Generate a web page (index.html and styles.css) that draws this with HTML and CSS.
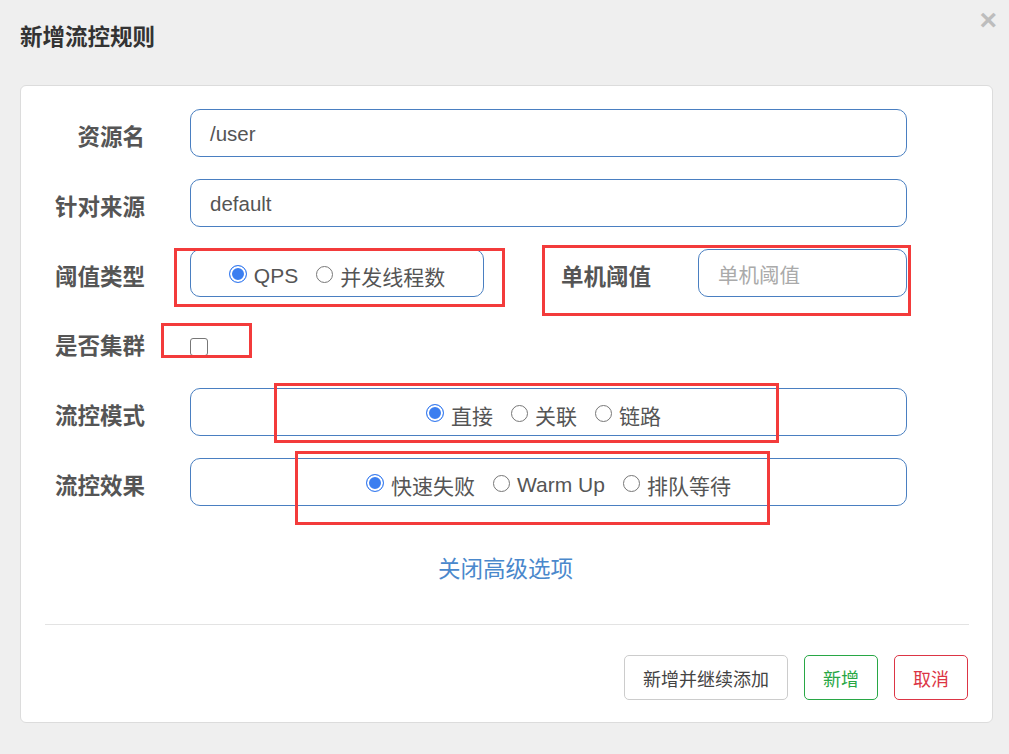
FILE: index.html
```html
<!DOCTYPE html>
<html lang="zh">
<head>
<meta charset="utf-8">
<title>新增流控规则</title>
<link rel="stylesheet" href="styles.css">
</head>
<body>
<div class="page">
  <header class="dlg-head">
    <h1 class="dlg-title">新增流控规则</h1>
    <span class="dlg-close">×</span>
  </header>
  <section class="panel">
    <div class="row">
      <label class="lbl">资源名</label>
      <div class="field wide">/user</div>
    </div>
    <div class="row">
      <label class="lbl">针对来源</label>
      <div class="field wide">default</div>
    </div>
    <div class="row">
      <label class="lbl">阈值类型</label>
      <div class="field radios half">
        <span class="opt"><span class="radio on"></span>QPS</span>
        <span class="opt"><span class="radio"></span>并发线程数</span>
      </div>
      <label class="lbl lbl2">单机阈值</label>
      <div class="field small placeholder">单机阈值</div>
    </div>
    <div class="row row-check">
      <label class="lbl">是否集群</label>
      <span class="checkbox"></span>
    </div>
    <div class="row">
      <label class="lbl">流控模式</label>
      <div class="field radios wide mode">
        <span class="opt"><span class="radio on"></span>直接</span>
        <span class="opt"><span class="radio"></span>关联</span>
        <span class="opt"><span class="radio"></span>链路</span>
      </div>
    </div>
    <div class="row">
      <label class="lbl">流控效果</label>
      <div class="field radios wide">
        <span class="opt"><span class="radio on"></span>快速失败</span>
        <span class="opt"><span class="radio"></span>Warm Up</span>
        <span class="opt"><span class="radio"></span>排队等待</span>
      </div>
    </div>
    <div class="link-row"><a class="adv-link">关闭高级选项</a></div>
    <hr class="divider">
    <div class="actions">
      <button class="btn btn-default">新增并继续添加</button>
      <button class="btn btn-ok">新增</button>
      <button class="btn btn-cancel">取消</button>
    </div>
  </section>
  <div class="mark m1"></div>
  <div class="mark m2"></div>
  <div class="mark m3"></div>
  <div class="mark m4"></div>
  <div class="mark m5"></div>
</div>
</body>
</html>
```
FILE: styles.css
```css
* { box-sizing: border-box; }
html, body { margin: 0; padding: 0; }
body {
  background: #efefef;
  font-family: "Liberation Sans", "Noto Sans CJK SC", sans-serif;
  color: #555;
  width: 1009px;
  height: 754px;
  overflow: hidden;
}
.page { position: relative; width: 1009px; height: 754px; padding: 0 16px 0 20px; }
.dlg-head {
  display: flex;
  justify-content: space-between;
  align-items: flex-start;
  height: 85px;
}
.dlg-title {
  margin: 25px 0 0 0;
  font-size: 22.5px;
  line-height: 26px;
  font-weight: bold;
  color: #333;
}
.dlg-close {
  margin: 5px -4px 0 0;
  font-size: 30px;
  line-height: 30px;
  font-weight: bold;
  color: #bdbdbd;
}
.panel {
  width: 973px;
  height: 638px;
  background: #fff;
  border: 1px solid #dcdcdc;
  border-radius: 6px;
  padding: 23px 24px 0 32px;
}
.row {
  display: flex;
  align-items: center;
  height: 48px;
  margin-bottom: 22px;
}
.row-check { height: 47px; margin-bottom: 22px; }
.lbl {
  width: 92px;
  text-align: right;
  font-size: 22.5px;
  font-weight: bold;
  color: #555;
  padding-top: 3px;
  margin-right: 45px;
  white-space: nowrap;
}
.lbl2 { text-align: left; margin-left: 77px; }
.field {
  height: 48px;
  border: 1px solid #4a7fc1;
  border-radius: 10px;
  font-size: 20.5px;
  color: #555;
  display: flex;
  align-items: center;
  padding-left: 19px;
  padding-top: 2px;
}
.wide { width: 717px; }
.half { width: 294px; }
.small { width: 209px; }
.placeholder { color: #aaa; }
.radios { justify-content: center; padding-left: 0; padding-top: 5px; gap: 18px; font-size: 21px; }
.wide.radios { padding-left: 0; }
.wide.mode { padding-right: 10px; }
.opt { display: inline-flex; align-items: center; white-space: nowrap; }
.radio {
  width: 17px;
  height: 17px;
  border: 1.5px solid #777;
  border-radius: 50%;
  margin-right: 7px;
  margin-top: -3px;
  background: #fff;
}
.radio.on {
  border: 1.5px solid #3b7ef0;
  background: #3b7ef0;
  box-shadow: inset 0 0 0 2px #fff;
  width: 18px;
  height: 18px;
}
.checkbox {
  width: 18px;
  height: 18px;
  border: 1.5px solid #777;
  border-radius: 3px;
  margin-top: 8px;
}
.link-row { text-align: center; padding: 28px 0 0 0; height: 96px; margin-left: -10px; }
.adv-link { font-size: 22.5px; color: #4a88cc; line-height: 28px; }
.divider {
  margin: 0 0 0 -8px;
  border: 0;
  border-top: 1px solid #e3e3e3;
  width: 924px;
}
.actions {
  display: flex;
  justify-content: flex-end;
  gap: 16px;
  margin-top: 30px;
}
.btn {
  height: 45px;
  background: #fff;
  border-radius: 5px;
  font-family: "Liberation Sans", "Noto Sans CJK SC", sans-serif;
  font-size: 18px;
  padding: 0;
}
.btn-default { width: 164px; border: 1px solid #ccc; color: #444; }
.btn-ok { width: 74px; border: 1px solid #28a745; color: #28a745; }
.btn-cancel { width: 74px; border: 1px solid #dc3545; color: #dc3545; }
.mark { position: absolute; border: 3px solid #f33b3b; }
.m1 { left: 174px; top: 248px; width: 331px; height: 59px; }
.m2 { left: 542px; top: 245px; width: 369px; height: 71px; }
.m3 { left: 161px; top: 323px; width: 91px; height: 35px; }
.m4 { left: 274px; top: 383px; width: 505px; height: 60px; }
.m5 { left: 295px; top: 451px; width: 475px; height: 74px; }
```
